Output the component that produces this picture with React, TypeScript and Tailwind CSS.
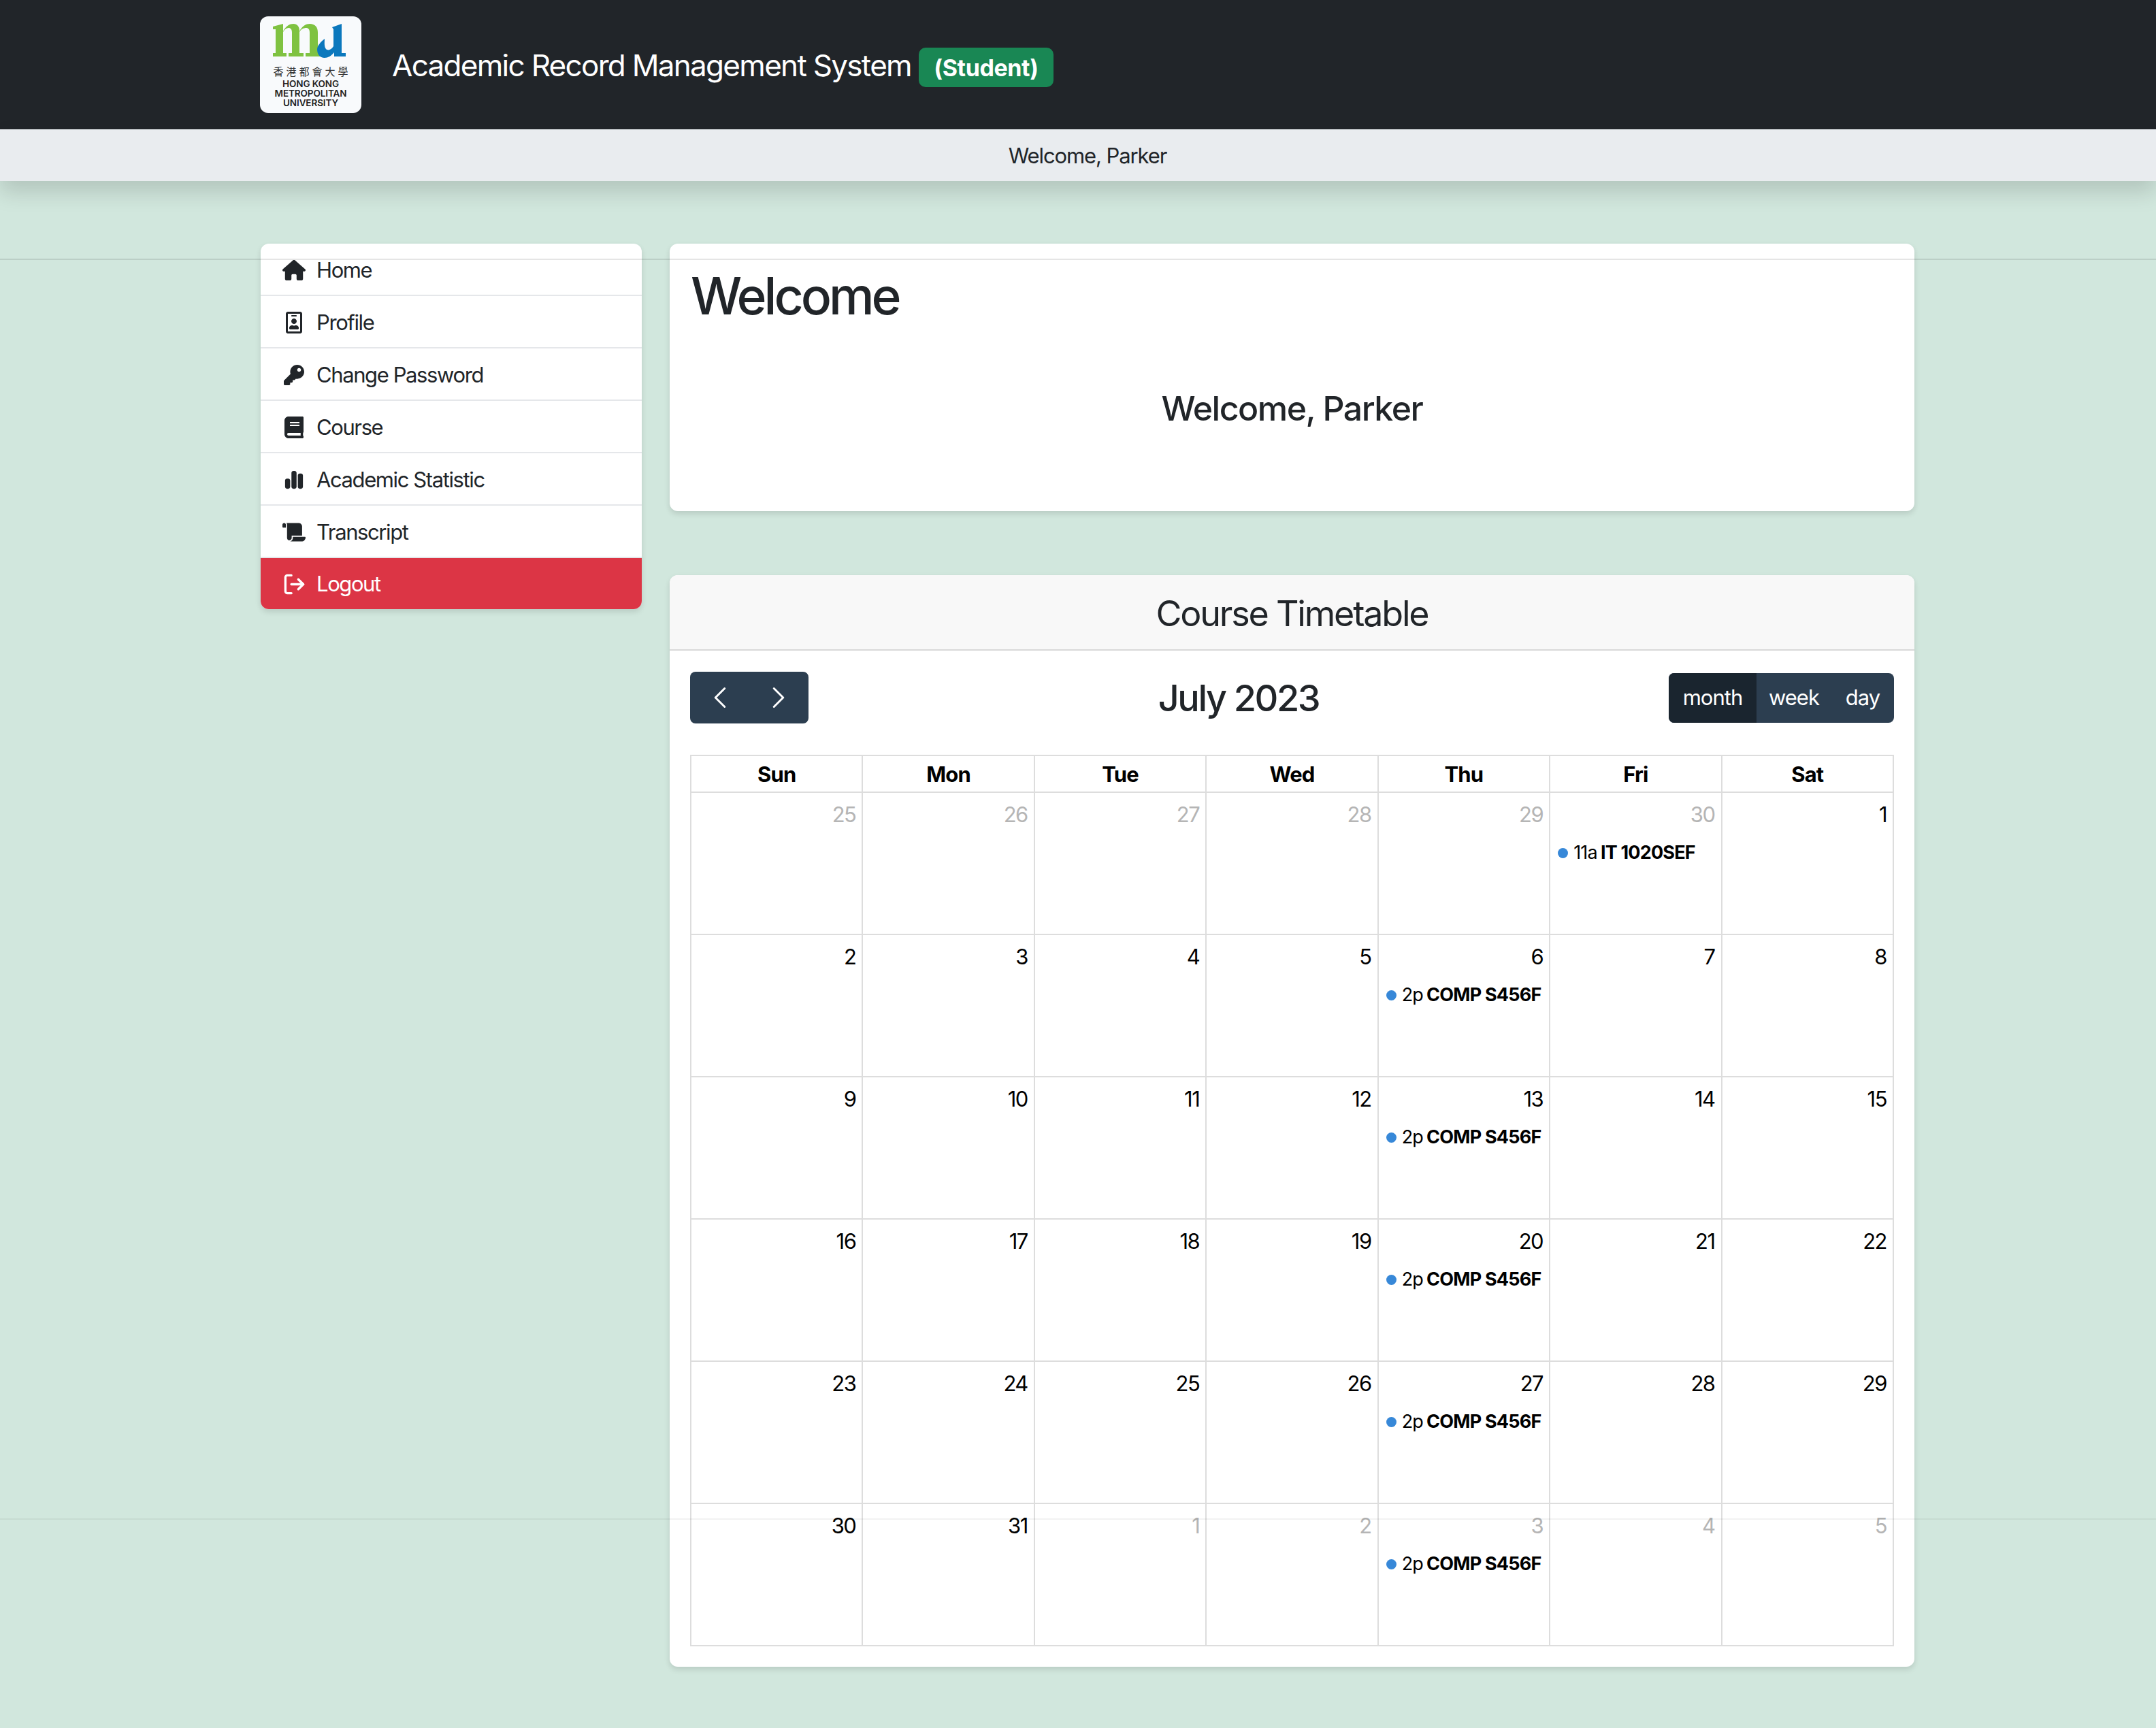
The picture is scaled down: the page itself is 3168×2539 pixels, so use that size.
import { ChevronLeft, ChevronRight, LogOut } from 'lucide-react'
import { FaBook, FaKey, FaRegIdBadge, FaScroll } from 'react-icons/fa'
import { FaChartSimple, FaHouse } from 'react-icons/fa6'
import type { ReactNode } from 'react'

const menu: { label: string; icon: ReactNode }[] = [
  { label: 'Home', icon: <FaHouse className="text-[34px] w-[34px]" /> },
  { label: 'Profile', icon: <FaRegIdBadge className="text-[32px] w-[34px]" /> },
  { label: 'Change Password', icon: <FaKey className="text-[30px] w-[34px]" /> },
  { label: 'Course', icon: <FaBook className="text-[32px] w-[34px]" /> },
  { label: 'Academic Statistic', icon: <FaChartSimple className="text-[30px] w-[34px]" /> },
  { label: 'Transcript', icon: <FaScroll className="text-[30px] w-[34px]" /> },
]

type Day = { n: number; muted?: boolean; time?: string; course?: string }

const weeks: Day[][] = [
  [
    { n: 25, muted: true }, { n: 26, muted: true }, { n: 27, muted: true }, { n: 28, muted: true }, { n: 29, muted: true },
    { n: 30, muted: true, time: '11a', course: 'IT 1020SEF' }, { n: 1 },
  ],
  [{ n: 2 }, { n: 3 }, { n: 4 }, { n: 5 }, { n: 6, time: '2p', course: 'COMP S456F' }, { n: 7 }, { n: 8 }],
  [{ n: 9 }, { n: 10 }, { n: 11 }, { n: 12 }, { n: 13, time: '2p', course: 'COMP S456F' }, { n: 14 }, { n: 15 }],
  [{ n: 16 }, { n: 17 }, { n: 18 }, { n: 19 }, { n: 20, time: '2p', course: 'COMP S456F' }, { n: 21 }, { n: 22 }],
  [{ n: 23 }, { n: 24 }, { n: 25 }, { n: 26 }, { n: 27, time: '2p', course: 'COMP S456F' }, { n: 28 }, { n: 29 }],
  [
    { n: 30 }, { n: 31 }, { n: 1, muted: true }, { n: 2, muted: true },
    { n: 3, muted: true, time: '2p', course: 'COMP S456F' }, { n: 4, muted: true }, { n: 5, muted: true },
  ],
]

function Logo() {
  return (
    <div className="w-[149px] h-[142px] bg-[#f8fafc] rounded-[12px] flex flex-col items-center shrink-0 overflow-hidden">
      <svg viewBox="0 0 124 60" className="w-[124px] h-[60px] mt-[6px] shrink-0">
        <g fill="#7fc241">
          <path d="M6 9L21 5V48H26V53H6V48H10V13H6Z" />
          <path d="M21 16C25 8 31 5 36 5C42 5 45 9 45 16V48H51V53H29V48H34V18C34 13 32 11 29 11C26 11 23 13 21 17Z" />
          <path d="M45 16C49 8 55 5 60 5C68 5 72 10 72 18V32C72 40 73 46 76 53H54V48H60V18C60 13 58 11 55 11C51 11 47 13 45 17Z" />
        </g>
        <path d="M82 27C82 32 81 38 84 42C87 45 92 43 95 38V13L93 10L107 5V48H113V53H96V47C92 52 87 55 82 55C75 55 71 50 71 42C72 36 76 32 82 27Z" fill="#0b78bd" />
      </svg>
      <div className="mt-[6px] text-[15px] leading-[18px] tracking-[4px] pl-[4px] text-[#333] font-['Noto_Sans_CJK_TC',sans-serif]">香港都會大學</div>
      <div className="mt-[2px] text-[13.5px] leading-[14px] tracking-[-0.1px] font-semibold text-[#222] text-center whitespace-nowrap">
        <div>HONG KONG</div>
        <div>METROPOLITAN</div>
        <div>UNIVERSITY</div>
      </div>
    </div>
  )
}

export default function App() {
  return (
    <div className="relative min-h-[2539px] bg-[#d1e7dd] text-[#212529] font-['Inter',sans-serif] text-[31px] overflow-hidden">
      {/* Header */}
      <div className="h-[190px] bg-[#212529] flex items-center pl-[382px]">
        <Logo />
        <h1 className="ml-[45px] mt-[2px] text-[44px] text-white tracking-[-1.7px]">Academic Record Management System</h1>
        <span className="ml-[11px] mt-[8px] h-[58px] w-[198px] flex items-center justify-center rounded-[10px] bg-[#198754] text-white text-[34px] tracking-[-0.4px] font-bold">(Student)</span>
      </div>
      <div className="h-[76px] pt-[2px] bg-[#e9ecef] flex items-center justify-center pl-[28px] tracking-[-1.1px] shadow-[0_16px_32px_rgba(0,0,0,0.15)] relative">
        Welcome, Parker
      </div>

      <div className="flex items-start gap-[41px] pl-[383px] pt-[92px]">
        {/* Sidebar */}
        <div className="w-[560px] bg-white rounded-[12px] overflow-hidden tracking-[-1.4px] shadow-[0_4px_8px_rgba(0,0,0,0.12)]">
          {menu.map(m => (
            <div key={m.label} className="h-[77px] pt-[3px] border-b-2 border-[#e5e7ea] flex items-center gap-[16px] pl-[32px]">
              {m.icon}
              <span>{m.label}</span>
            </div>
          ))}
          <div className="h-[75px] pt-[2px] bg-[#dc3545] text-white flex items-center gap-[15px] pl-[32px]">
            <LogOut className="w-[35px] h-[35px]" strokeWidth={2.3} />
            <span>Logout</span>
          </div>
        </div>

        <div className="w-[1829px]">
          {/* Welcome card */}
          <div className="h-[393px] bg-white rounded-[12px] shadow-[0_4px_8px_rgba(0,0,0,0.12)] px-[31px] pt-[32px]">
            <h2 className="text-[75px] leading-[90px] tracking-[-4px] font-medium">Welcome</h2>
            <h4 className="mt-[90px] text-center text-[50px] leading-[60px] tracking-[-1.5px] font-medium">Welcome, Parker</h4>
          </div>

          {/* Timetable card */}
          <div className="mt-[94px] bg-white rounded-[12px] shadow-[0_4px_8px_rgba(0,0,0,0.12)] overflow-hidden">
            <div className="h-[111px] pt-[4px] bg-[#f8f8f8] border-b-2 border-[#d9d9d9] flex items-center justify-center text-[52px] tracking-[-2.2px]">
              Course Timetable
            </div>
            <div className="px-[30px] pt-[31px] pb-[30px]">
              <div className="h-[76px] flex items-center justify-between">
                <div className="flex h-[76px] w-[174px] bg-[#2c3e50] rounded-[8px] text-white items-center justify-between px-[17px]">
                  <ChevronLeft className="w-[54px] h-[54px]" strokeWidth={1.3} />
                  <ChevronRight className="w-[54px] h-[54px]" strokeWidth={1.3} />
                </div>
                <div className="text-[54px] font-medium tracking-[-2.4px]">July 2023</div>
                <div className="flex h-[73px] w-[331px] rounded-[8px] overflow-hidden text-white bg-[#2c3e50] tracking-[-1px]">
                  <div className="w-[129px] bg-[#1a252f] flex items-center justify-center">month</div>
                  <div className="w-[110px] flex items-center justify-center">week</div>
                  <div className="flex-1 flex items-center justify-center">day</div>
                </div>
              </div>

              {/* Calendar */}
              <div className="mt-[46px] border-t-2 border-l-2 border-[#dddddd] grid grid-cols-7 w-[1769px]">
                {['Sun', 'Mon', 'Tue', 'Wed', 'Thu', 'Fri', 'Sat'].map(d => (
                  <div key={d} className="h-[54px] pt-[2px] border-r-2 border-b-2 border-[#dddddd] flex items-center justify-center font-bold text-black tracking-[-0.8px]">
                    {d}
                  </div>
                ))}
                {weeks.flat().map((d, i) => (
                  <div key={i} className="h-[209px] border-r-2 border-b-2 border-[#dddddd] px-[8px] pt-[12px]">
                    <div className={`text-right pr-[1px] leading-[40px] tracking-[-1.5px] ${d.muted ? 'text-[#b5b5b5]' : 'text-black'}`}>{d.n}</div>
                    {d.time && (
                      <div className="mt-[18px] flex items-center text-[27px] leading-[36px] text-black pl-[3px] tracking-[-0.8px]">
                        <span className="w-[15px] h-[15px] rounded-full bg-[#3788d8] mr-[8px] shrink-0" />
                        <span>{d.time}</span>
                        <span className="ml-[5px] font-bold whitespace-nowrap">{d.course}</span>
                      </div>
                    )}
                  </div>
                ))}
              </div>
            </div>
          </div>
        </div>
      </div>

      {/* thin seams that run across the whole shot */}
      <div className="absolute left-0 right-0 top-[380px] h-[2px] bg-black/10 pointer-events-none" />
      <div className="absolute left-0 right-0 top-[2231px] h-[2px] bg-black/5 pointer-events-none" />
    </div>
  )
}
